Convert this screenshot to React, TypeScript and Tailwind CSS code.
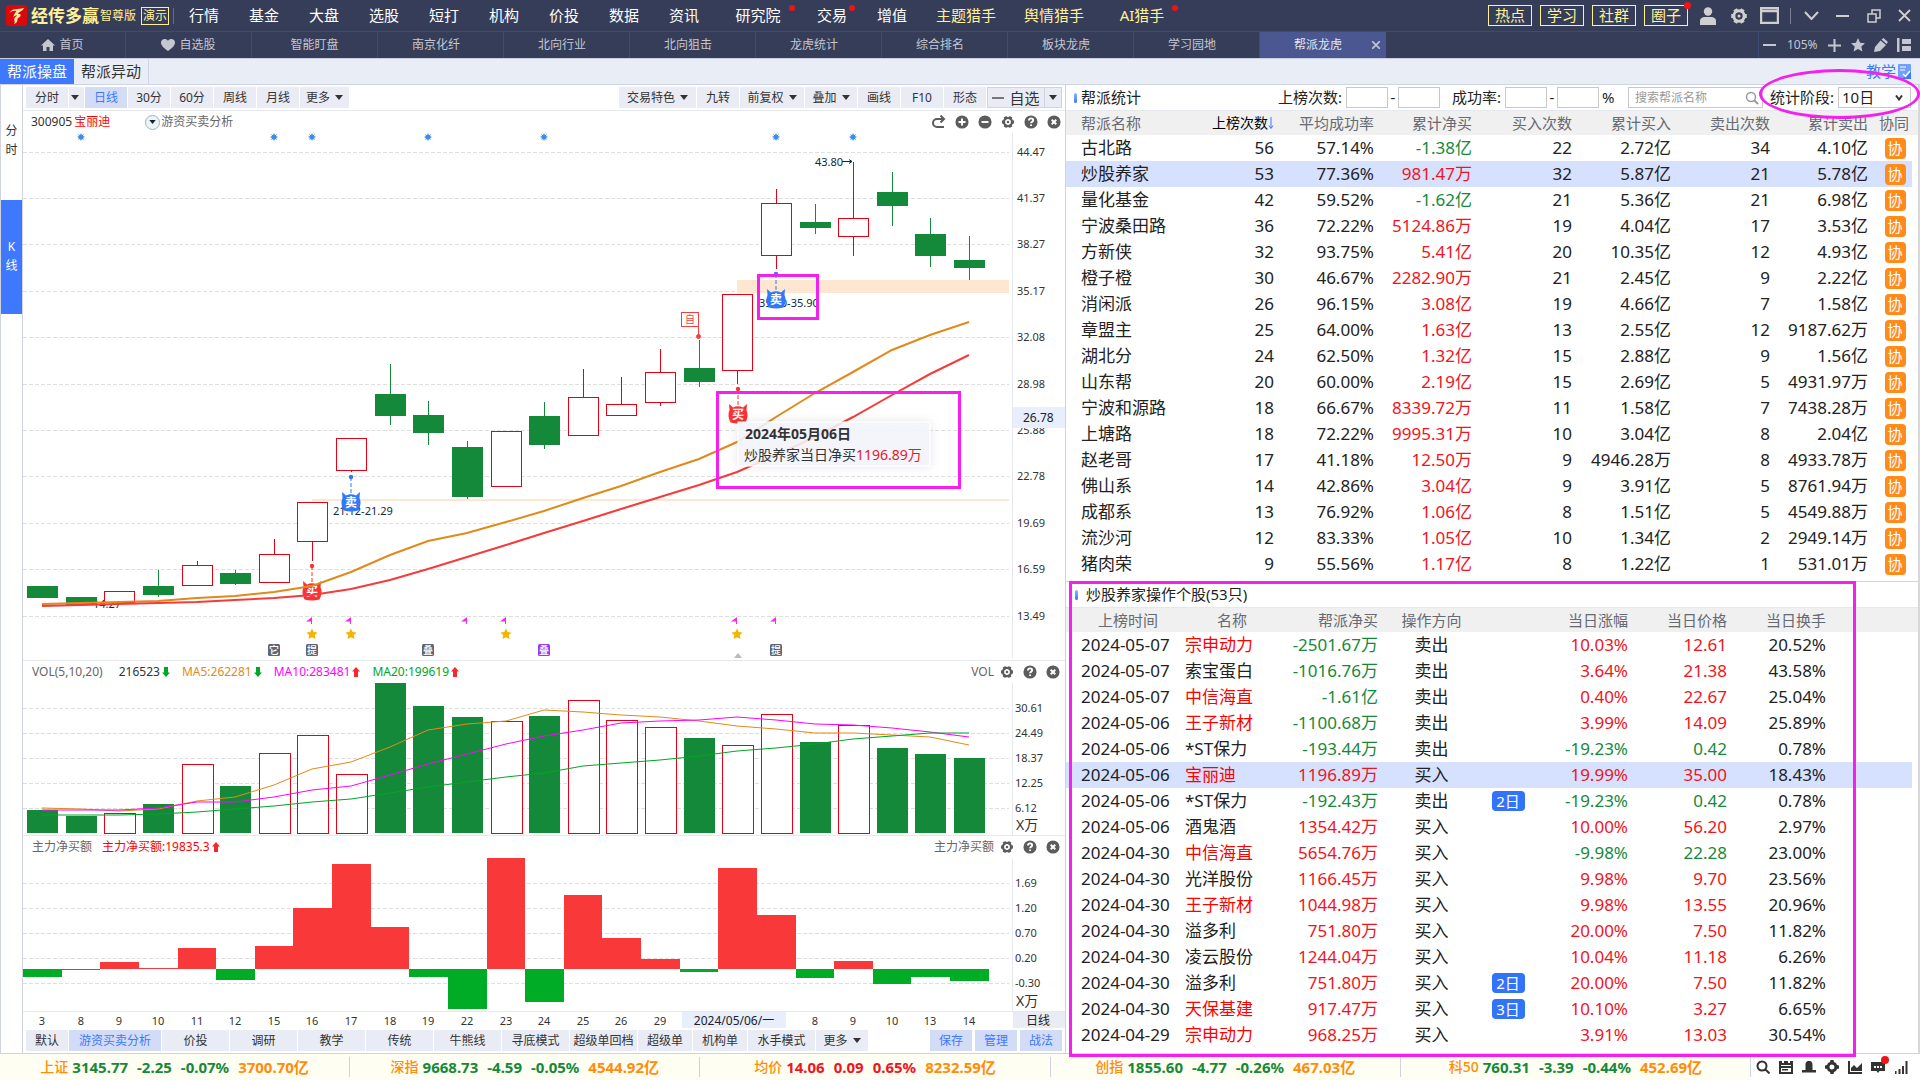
import React from "react";

const UP = "text-[#f0141e]";
const DOWN = "text-[#15893a]";
const RED = "#e60012";
const GREEN = "#15893a";

const STEP = 38.63;
const cx = (i: number) => Math.round(42 + i * STEP);
const line = (ys: number[]) => ys.map((y, i) => `${cx(i)},${y}`).join(" ");

/* ---------- data ---------- */

// [rising, body top, body bottom, wick top, wick bottom]
const candles: [number, number, number, number, number][] = [
  [0, 586, 598, 586, 598],
  [0, 597, 605, 597, 605],
  [1, 591, 603, 591, 603],
  [0, 586, 595, 570, 597],
  [1, 565, 586, 561, 586],
  [0, 573, 584, 570, 585],
  [1, 554, 583, 539, 583],
  [1, 502, 542, 502, 561],
  [1, 438, 471, 438, 472],
  [0, 394, 416, 364, 425],
  [0, 415, 433, 401, 445],
  [0, 447, 497, 441, 499],
  [1, 431, 487, 431, 487],
  [0, 416, 445, 402, 449],
  [1, 397, 436, 369, 436],
  [1, 404, 416, 377, 416],
  [1, 372, 403, 349, 406],
  [0, 368, 382, 340, 387],
  [1, 294, 371, 294, 384],
  [1, 203, 256, 189, 269],
  [0, 222, 228, 204, 234],
  [1, 218, 237, 162, 256],
  [0, 192, 206, 172, 226],
  [0, 234, 256, 218, 267],
  [0, 260, 268, 236, 280],
];
const volumeTops = [
  810, 816, 813, 804, 764, 786, 753, 735, 774, 683, 706, 717, 721, 716, 700, 720, 727, 738, 745, 714, 742, 725, 748,
  754, 758,
];
const flow = [
  977, 970, 962, 968, 948, 980, 946, 908, 864, 927, 977, 1009, 858, 1002, 895, 938, 959, 972, 868, 915, 978, 961, 984,
  977, 981,
];
const trendOrange = [
  604, 603, 602, 601, 598, 596, 592, 586, 572, 555, 541, 533, 522, 511, 498, 486, 472, 459, 442, 417, 393, 372, 350,
  335, 322,
];
const trendRed = [
  606, 605, 604, 603, 602, 600, 598, 595, 589, 580, 569, 557, 545, 533, 521, 509, 497, 485, 472, 455, 437, 417, 395,
  374, 355,
];
const ma5 = [
  808, 809, 811, 809, 801, 797, 785, 769, 762, 747, 730, 724, 721, 710, 712, 715, 717, 721, 726, 729, 733, 733, 735,
  737, 745,
];
const ma10 = [
  810, 810, 810, 808, 802, 802, 797, 790, 786, 775, 764, 754, 744, 736, 730, 723, 721, 720, 717, 720, 724, 725, 728,
  732, 737,
];
const ma20 = [
  815, 815, 815, 814, 812, 809, 806, 802, 799, 793, 787, 782, 777, 773, 766, 763, 760, 756, 751, 748, 744, 739, 736,
  733, 733,
];
const priceGrid: [string, number][] = [
  ["44.47", 152],
  ["41.37", 198],
  ["38.27", 244],
  ["35.17", 291],
  ["32.08", 337],
  ["28.98", 384],
  ["25.88", 430],
  ["22.78", 476],
  ["19.69", 523],
  ["16.59", 569],
  ["13.49", 616],
];
const volGrid: [string, number][] = [
  ["30.61", 708],
  ["24.49", 733],
  ["18.37", 758],
  ["12.25", 783],
  ["6.12", 808],
];
const flowGrid: [string, number][] = [
  ["1.69", 883],
  ["1.20", 908],
  ["0.70", 933],
  ["0.20", 958],
  ["-0.30", 983],
];
const days = "3,8,9,10,11,12,15,16,17,18,19,22,23,24,25,26,29,,,,8,9,10,13,14".split(",");

const gangs: string[][] = [
  ["古北路", "56", "57.14%", "-1.38亿", "22", "2.72亿", "34", "4.10亿"],
  ["炒股养家", "53", "77.36%", "981.47万", "32", "5.87亿", "21", "5.78亿"],
  ["量化基金", "42", "59.52%", "-1.62亿", "21", "5.36亿", "21", "6.98亿"],
  ["宁波桑田路", "36", "72.22%", "5124.86万", "19", "4.04亿", "17", "3.53亿"],
  ["方新侠", "32", "93.75%", "5.41亿", "20", "10.35亿", "12", "4.93亿"],
  ["橙子橙", "30", "46.67%", "2282.90万", "21", "2.45亿", "9", "2.22亿"],
  ["消闲派", "26", "96.15%", "3.08亿", "19", "4.66亿", "7", "1.58亿"],
  ["章盟主", "25", "64.00%", "1.63亿", "13", "2.55亿", "12", "9187.62万"],
  ["湖北分", "24", "62.50%", "1.32亿", "15", "2.88亿", "9", "1.56亿"],
  ["山东帮", "20", "60.00%", "2.19亿", "15", "2.69亿", "5", "4931.97万"],
  ["宁波和源路", "18", "66.67%", "8339.72万", "11", "1.58亿", "7", "7438.28万"],
  ["上塘路", "18", "72.22%", "9995.31万", "10", "3.04亿", "8", "2.04亿"],
  ["赵老哥", "17", "41.18%", "12.50万", "9", "4946.28万", "8", "4933.78万"],
  ["佛山系", "14", "42.86%", "3.04亿", "9", "3.91亿", "5", "8761.94万"],
  ["成都系", "13", "76.92%", "1.06亿", "8", "1.51亿", "5", "4549.88万"],
  ["流沙河", "12", "83.33%", "1.05亿", "10", "1.34亿", "2", "2949.14万"],
  ["猪肉荣", "9", "55.56%", "1.17亿", "8", "1.22亿", "1", "531.01万"],
];

// [date, name, name in red, net, side, badge, change, price, turnover]
const trades: string[][] = [
  ["2024-05-07", "宗申动力", "1", "-2501.67万", "卖出", "", "10.03%", "12.61", "20.52%"],
  ["2024-05-07", "索宝蛋白", "", "-1016.76万", "卖出", "", "3.64%", "21.38", "43.58%"],
  ["2024-05-07", "中信海直", "1", "-1.61亿", "卖出", "", "0.40%", "22.67", "25.04%"],
  ["2024-05-06", "王子新材", "1", "-1100.68万", "卖出", "", "3.99%", "14.09", "25.89%"],
  ["2024-05-06", "*ST保力", "", "-193.44万", "卖出", "", "-19.23%", "0.42", "0.78%"],
  ["2024-05-06", "宝丽迪", "1", "1196.89万", "买入", "", "19.99%", "35.00", "18.43%"],
  ["2024-05-06", "*ST保力", "", "-192.43万", "卖出", "2日", "-19.23%", "0.42", "0.78%"],
  ["2024-05-06", "酒鬼酒", "", "1354.42万", "买入", "", "10.00%", "56.20", "2.97%"],
  ["2024-04-30", "中信海直", "1", "5654.76万", "买入", "", "-9.98%", "22.28", "23.00%"],
  ["2024-04-30", "光洋股份", "", "1166.45万", "买入", "", "9.98%", "9.70", "23.56%"],
  ["2024-04-30", "王子新材", "1", "1044.98万", "买入", "", "9.98%", "13.55", "20.96%"],
  ["2024-04-30", "溢多利", "", "751.80万", "买入", "", "20.00%", "7.50", "11.82%"],
  ["2024-04-30", "凌云股份", "", "1244.04万", "买入", "", "10.04%", "11.18", "6.26%"],
  ["2024-04-30", "溢多利", "", "751.80万", "买入", "2日", "20.00%", "7.50", "11.82%"],
  ["2024-04-30", "天保基建", "1", "917.47万", "买入", "3日", "10.10%", "3.27", "6.65%"],
  ["2024-04-29", "宗申动力", "1", "968.25万", "买入", "", "3.91%", "13.03", "30.54%"],
];

const indices: string[][] = [
  ["上证", "3145.77", "-2.25", "-0.07%", "3700.70亿"],
  ["深指", "9668.73", "-4.59", "-0.05%", "4544.92亿"],
  ["均价", "14.06", "0.09", "0.65%", "8232.59亿"],
  ["创指", "1855.60", "-4.77", "-0.26%", "467.03亿"],
  ["科50", "760.31", "-3.39", "-0.44%", "452.69亿"],
];

const sign = (v: string) => (v.startsWith("-") ? DOWN : UP);

/* ---------- icons ---------- */

const Gear = ({ className = "" }: { className?: string }) => (
  <svg viewBox="0 0 16 16" className={className} fill="none" stroke="currentColor">
    <circle cx="8" cy="8" r="4.6" strokeWidth="2.6" />
    {[0, 60, 120, 180, 240, 300].map((a) => (
      <path key={a} d="M13.2 6.2v3.6" strokeWidth="3.4" transform={`rotate(${a} 8 8)`} />
    ))}
    <circle cx="8" cy="8" r="1.4" fill="currentColor" stroke="none" />
  </svg>
);
const Disc = ({ d }: { d: string }) => (
  <svg viewBox="0 0 16 16" className="size-[14px]">
    <circle cx="8" cy="8" r="7.5" fill="#5c5c5c" />
    <path d={d} fill="none" stroke="#fff" strokeWidth="2.2" />
  </svg>
);
const D_PLUS = "M8 4v8M4 8h8";
const D_MINUS = "M4 8h8";
const D_HELP = "M5.6 6.2c0-3.2 4.9-3 4.9-.2 0 1.6-2.4 1.7-2.4 3.4M8.1 10.8v1.8";
const D_CLOSE = "M5.4 5.4l5.2 5.2M10.6 5.4l-5.2 5.2";
const Caret = () => (
  <svg viewBox="0 0 8 5" className="h-[5px] w-2">
    <path d="M0 0h8L4 5z" fill="#333" />
  </svg>
);
const Arrow = ({ up }: { up?: boolean }) => (
  <svg viewBox="0 0 8 10" className="ml-[2px] h-[10px] w-2">
    <path
      d="M4 0l4 4.5H6V10H2V4.5H0z"
      fill={up ? "#f5282d" : "#00a625"}
      transform={up ? undefined : "rotate(180 4 5)"}
    />
  </svg>
);
const IconBtn = ({ label, children, className = "" }: { label: string; children: React.ReactNode; className?: string }) => (
  <button aria-label={label} className={`flex items-center justify-center ${className}`}>
    {children}
  </button>
);
const Dot = ({ className }: { className: string }) => (
  <span className={`absolute rounded-full bg-[#f01414] ${className}`} />
);

/* ---------- top bars ---------- */

const menu: [string, string, number][] = [
  ["行情", "w-[60px]", 0],
  ["基金", "w-[60px]", 0],
  ["大盘", "w-[60px]", 0],
  ["选股", "w-[60px]", 0],
  ["短打", "w-[60px]", 0],
  ["机构", "w-[60px]", 0],
  ["价投", "w-[60px]", 0],
  ["数据", "w-[60px]", 0],
  ["资讯", "w-[60px]", 0],
  ["研究院", "w-[88px]", 2],
  ["交易", "w-[60px]", 1],
  ["增值", "w-[60px]", 0],
  ["主题猎手", "w-[88px] text-[#fff19a]", 0],
  ["舆情猎手", "w-[88px] text-[#fff19a]", 0],
  ["AI猎手", "w-[88px] text-[#fff19a]", 2],
];

function TitleBar() {
  return (
    <header className="flex h-8 items-center border-b border-[#3e4a78] bg-[#363d59] text-[15px] text-white">
      <svg viewBox="0 0 21 21" className="ml-[6px] size-[21px]">
        <rect width="21" height="21" rx="3" fill="#d8080d" />
        <path
          d="M3.500 8C6 3 12 4.500 18 3c-1.500 3.500-4.500 3-6.500 6 2.500-.5 3.500.5 3 2-.5 1.300-2.500 1.500-3 3-.5 1.700.5 3.500-3.500 5 2-2.500-1-4 1-6.500 1-1.200 2-1.500 2-2.200-1.500 0-3 1-3.500 2.200C7 10.500 9 8 10.500 6 8 5.500 5.500 6 3.500 8z"
          fill="#ffe9a0"
        />
      </svg>
      <span className="ml-1 text-[17px] font-bold text-[#fff19a]">经传多赢</span>
      <span className="ml-px text-xs text-[#fff19a]">智尊版</span>
      <span className="ml-[5px] border border-[#fff19a] px-px text-xs leading-4 text-[#fff19a]">演示</span>
      <span className="ml-1 h-4 w-px bg-[#666c84]" />
      <nav className="flex">
        {menu.map(([t, c, dot]) => (
          <button key={t} className={`relative h-6 ${c}`}>
            <span className="relative">
              {t}
              {dot === 1 && <Dot className="-right-2 top-0 size-[6px]" />}
              {dot === 2 && <Dot className="-right-[14px] top-0 size-[6px]" />}
            </span>
          </button>
        ))}
      </nav>
      <div className="ml-auto flex items-center text-[#cfcfcf]">
        <div className="flex gap-2">
          {["热点", "学习", "社群", "圈子"].map((t) => (
            <button key={t} className="relative w-11 border border-[#fff19a] leading-[19px] text-[#fff19a]">
              {t}
              {t === "圈子" && <Dot className="-right-1 -top-1 size-[7px]" />}
            </button>
          ))}
        </div>
        <IconBtn label="用户" className="ml-3 w-4">
          <svg viewBox="0 0 16 18" className="h-[18px] w-4" fill="currentColor">
            <circle cx="8" cy="4.5" r="4.2" />
            <path d="M0 18v-4c0-3 3-4 4.500-4h7c1.500 0 4.500 1 4.500 4v4z" />
          </svg>
        </IconBtn>
        <IconBtn label="设置" className="ml-[14px]">
          <Gear className="size-[18px]" />
        </IconBtn>
        <IconBtn label="窗口" className="ml-3">
          <svg viewBox="0 0 19 17" className="h-[17px] w-[19px]">
            <path d="M1 1h17v15H1zM1 4h17" fill="none" stroke="currentColor" strokeWidth="2.5" />
          </svg>
        </IconBtn>
        <span className="ml-[11px] h-4 w-px bg-[#7b8095]" />
        <IconBtn label="展开" className="ml-[13px]">
          <svg viewBox="0 0 15 9" className="h-[9px] w-[15px]">
            <path d="M1 1l6.500 7L14 1" fill="none" stroke="currentColor" strokeWidth="2" />
          </svg>
        </IconBtn>
        <IconBtn label="最小化" className="ml-[17px]">
          <span className="h-[2px] w-[13px] bg-current" />
        </IconBtn>
        <IconBtn label="还原" className="ml-[18px]">
          <svg viewBox="0 0 14 14" className="size-[14px]" fill="none" stroke="currentColor" strokeWidth="1.5">
            <path d="M1 5h8v8H1zM5 5V1h8v8H9" />
          </svg>
        </IconBtn>
        <IconBtn label="关闭" className="ml-[17px] mr-[9px]">
          <svg viewBox="0 0 13 13" className="size-[13px]">
            <path d="M1 1l11 11M12 1L1 12" stroke="currentColor" strokeWidth="1.8" />
          </svg>
        </IconBtn>
      </div>
    </header>
  );
}

const pages = ["首页", "自选股", "智能盯盘", "南京化纤", "北向行业", "北向狙击", "龙虎统计", "综合排名", "板块龙虎", "学习园地"];

function PageTabs() {
  return (
    <nav className="flex h-[27px] border-b border-[#c9cfe0] bg-[#363d59] text-xs text-[#c4c7d0]">
      {pages.map((t, i) => (
        <button
          key={t}
          className={`flex w-[126px] items-center justify-center gap-1 border-r border-[#3f4b79] ${i > 2 ? "pr-[9px]" : ""}`}
        >
          {t === "首页" && (
            <svg viewBox="0 0 14 12" className="h-3 w-[14px]" fill="currentColor">
              <path d="M7 0l7 6.500h-2V12H8.500V8h-3v4H2V6.500H0z" />
            </svg>
          )}
          {t === "自选股" && (
            <svg viewBox="0 0 14 12" className="h-3 w-[14px]" fill="currentColor">
              <path d="M7 12C2 8.500 0 6 0 3.500 0 0 5-1.500 7 2c2-3.500 7-2 7 1.500C14 6 12 8.500 7 12z" />
            </svg>
          )}
          {t}
        </button>
      ))}
      <div className="relative flex w-[126px] bg-[#4a5790] text-[#e4e6ee]">
        <button className="flex-1 pr-[10px]">帮派龙虎</button>
        <button aria-label="关闭标签" className="absolute inset-y-0 right-[6px]">
          <svg viewBox="0 0 8 8" className="size-2">
            <path d="M0 0l8 8M8 0L0 8" stroke="#c4c7d0" strokeWidth="1.6" />
          </svg>
        </button>
      </div>
      <div className="ml-auto flex items-center border-l border-[#3f4b79] pl-1 pr-[9px]">
        <IconBtn label="缩小">
          <span className="h-[2px] w-[13px] bg-current" />
        </IconBtn>
        <span className="ml-[11px] w-8">105%</span>
        <IconBtn label="放大" className="ml-[9px]">
          <svg viewBox="0 0 13 13" className="size-[13px]">
            <path d="M6.500 0v13M0 6.500h13" stroke="currentColor" strokeWidth="2" />
          </svg>
        </IconBtn>
        <IconBtn label="收藏" className="ml-[10px]">
          <svg viewBox="0 0 14 14" className="size-[14px]" fill="currentColor">
            <path d="M7 0l2.100 4.700 4.900.5-3.700 3.400 1.100 5L7 11l-4.400 2.600 1.100-5L0 5.200l4.900-.5z" />
          </svg>
        </IconBtn>
        <IconBtn label="编辑" className="ml-[9px]">
          <svg viewBox="0 0 14 14" className="size-[14px]" fill="currentColor">
            <path d="M0 14l1-5 5.500-6.500L12 7l-6 6zM7.500 1.500L9.500 0 14 4l-1.500 2z" />
          </svg>
        </IconBtn>
        <IconBtn label="布局" className="ml-[9px]">
          <svg viewBox="0 0 14 14" className="size-[14px]" fill="currentColor">
            <path d="M0 0h2.500v14H0zM5 1h9v5H5zM5 8h9v5H5z" />
          </svg>
        </IconBtn>
      </div>
    </nav>
  );
}

function SubTabs() {
  return (
    <nav className="flex h-[26px] border-b border-[#d0d5e6] bg-[#e9edf5] text-[15px] text-[#333]">
      <button className="w-[74px] bg-[#3d78ff] text-white">帮派操盘</button>
      <button className="w-[75px] border-r border-[#cfd5e6]">帮派异动</button>
      <a href="#teach" className="ml-auto flex items-center gap-[2px] pr-[9px] text-[#3d78ff]">
        教学
        <svg viewBox="0 0 13 15" className="h-[15px] w-[13px]">
          <rect width="13" height="15" rx="1" fill="#6fa0ff" />
          <path d="M13 7v8H4z" fill="#3d78ff" />
          <path d="M2 3h6M2 6h5" stroke="#fff" />
          <path d="M5 10l2.500 2.500L12 7" fill="none" stroke="#fff" strokeWidth="1.5" />
        </svg>
      </a>
    </nav>
  );
}

/* ---------- chart column ---------- */

const toolBtn = "flex h-[21px] items-center justify-center gap-[5px] whitespace-nowrap bg-[#e9ecf5]";

function ChartToolbar() {
  return (
    <div className="flex h-[26px] items-center border-b border-[#e6e8f0] px-[3px] text-xs text-[#333]">
      <div className="flex gap-px">
        <button className={`${toolBtn} w-[42px]`}>分时</button>
        <button aria-label="分时选项" className={`${toolBtn} w-[15px] pr-1`}>
          <Caret />
        </button>
        <button className="h-[21px] w-[42px] bg-[#d3dcf6] text-[#3d78ff]">日线</button>
        {["30分", "60分", "周线", "月线"].map((t) => (
          <button key={t} className={`${toolBtn} w-[42px]`}>
            {t}
          </button>
        ))}
        <button className={`${toolBtn} w-[49px]`}>
          更多
          <Caret />
        </button>
      </div>
      <div className="ml-auto flex gap-px">
        <button className={`${toolBtn} w-[77px]`}>
          交易特色
          <Caret />
        </button>
        <button className={`${toolBtn} w-[42px]`}>九转</button>
        <button className={`${toolBtn} w-[64px]`}>
          前复权
          <Caret />
        </button>
        <button className={`${toolBtn} w-[52px]`}>
          叠加
          <Caret />
        </button>
        {["画线", "F10", "形态"].map((t) => (
          <button key={t} className={`${toolBtn} w-[42px]`}>
            {t}
          </button>
        ))}
        <div className="flex">
          <button className={`${toolBtn} w-[58px] border border-[#cdd3e8] text-[15px]`}>
            <span className="h-[2px] w-3 bg-[#777]" />
            自选
          </button>
          <button aria-label="自选选项" className={`${toolBtn} w-[17px] border border-l-0 border-[#cdd3e8]`}>
            <Caret />
          </button>
        </div>
      </div>
    </div>
  );
}

const Grid = ({ rows, labelX }: { rows: [string, number][]; labelX: number }) => (
  <>
    {rows.map(([t, y]) => (
      <g key={t}>
        <path d={`M23 ${y + 0.5}H1009`} stroke="#dedede" strokeDasharray="4 2" />
        <text x={labelX} y={y + 4} fontSize="11" fill="#333">
          {t}
        </text>
      </g>
    ))}
  </>
);

const Devil = ({ x, y, buy }: { x: number; y: number; buy?: boolean }) => {
  const c = buy ? "#fa3232" : "#3278fa";
  return (
    <g transform={`translate(${x} ${y})`}>
      <path d="M0 -25v16" stroke={c} strokeDasharray="4 2" />
      <circle cy="-25" r="2.2" fill={c} />
      <path d="M-9 -10l4 3.500Q0 -9 5 -6.500L9 -10l-.5 6Q11 2 7.500 8.500Q0 10.500 -7.500 8.500Q-11 2 -8.500 -4z" fill={c} />
      <text y="5" fontSize="12" fontWeight="bold" fill="#fff" textAnchor="middle">
        {buy ? "买" : "卖"}
      </text>
    </g>
  );
};

const star = "M0 -5.500l1.700 3.600 3.800.5-2.800 2.600.8 3.900L0 3.200l-3.500 1.900.8-3.900L-5.500 -1.400l3.800-.5z";
const marks: [number, string, string][] = [
  [6, "它", "#5f6673"],
  [7, "提", "#5f6673"],
  [10, "叠", "#5f6673"],
  [13, "叠", "#9a3df0"],
  [19, "提", "#5f6673"],
];

function PriceChart() {
  return (
    <svg viewBox="23 133 1042 527" className="block w-full" role="img" aria-label="K线图">
      <defs>
        <filter id="tipShadow" x="-20%" y="-60%" width="140%" height="220%">
          <feDropShadow dx="0" dy="0" stdDeviation="5" floodColor="#000" floodOpacity="0.12" />
        </filter>
      </defs>
      <Grid rows={priceGrid} labelX={1017} />
      <path d="M1012.500 133V658" stroke="#e6e8f0" />
      <rect x="737" y="280" width="272" height="13" fill="#ffe6d0" />
      <path d="M312 500H1009" stroke="#ffe6d0" strokeWidth="2" />
      {[1, 6, 7, 10, 13, 19, 21].map((i) => (
        <g key={i} transform={`translate(${cx(i)} 137)`}>
          <circle r="2.6" fill="#3c8cf0" />
          <path d="M0 -3.500v7M-3.500 0h7M-2.500 -2.500l5 5M2.500 -2.500l-5 5" stroke="#3c8cf0" />
        </g>
      ))}
      <g fontSize="11" fill="#0d2b3e">
        <text x="815" y="166">43.80</text>
        <path d="M842 161.500h10M849 159.500l3 2-3 2" stroke="#0d2b3e" fill="none" />
        <text x="333" y="515">21.12-21.29</text>
        <text x="759" y="307">35.00-35.90</text>
        <text x="93" y="608">14.27</text>
      </g>
      {candles.map(([up, t, b, wt, wb], i) =>
        up ? (
          <g key={i} stroke={RED} fill="none">
            <path d={`M${cx(i) + 0.5} ${wt}V${t}M${cx(i) + 0.5} ${b}V${wb}`} />
            <rect x={cx(i) - 14.5} y={t + 0.5} width="30" height={b - t - 1} fill="#fff" />
          </g>
        ) : (
          <g key={i} fill={GREEN}>
            <rect x={cx(i)} y={wt} width="1" height={wb - wt} />
            <rect x={cx(i) - 15} y={t} width="31" height={b - t} />
          </g>
        ),
      )}
      <Devil x={312} y={591} buy />
      <polyline points={line(trendOrange)} fill="none" stroke="#e08a1a" strokeWidth="2" />
      <polyline points={line(trendRed)} fill="none" stroke="#f53b3b" strokeWidth="2" />
      <Devil x={351} y={502} />
      <Devil x={776} y={299} />
      <Devil x={738} y={414} buy />
      <g stroke="#fa3c3c">
        <rect x="681.5" y="312.5" width="17" height="14" fill="#fff" />
        <path d="M698.500 327v10" />
        <circle cx="698.5" cy="336.5" r="2" fill="#fa3c3c" />
      </g>
      <text x="690" y="323" fontSize="10" fill="#fa3c3c" textAnchor="middle">
        自
      </text>
      {[7, 8, 11, 12, 18, 19].map((i) => (
        <path key={i} d={`M${cx(i)} 617v7h-1v-2.500h-5z`} fill="#f528f0" />
      ))}
      {[7, 8, 12, 18].map((i) => (
        <path key={i} d={star} transform={`translate(${cx(i)} 634)`} fill="#f5b400" />
      ))}
      {marks.map(([i, t, c]) => (
        <g key={i}>
          <rect x={cx(i) - 6} y="644" width="12" height="12" rx="1.5" fill={c} />
          <text x={cx(i)} y="654" fontSize="10" fontWeight="500" fill="#fff" textAnchor="middle">
            {t}
          </text>
        </g>
      ))}
      <path d="M738 653l4 5h-8z" fill="#bbb" />
      <rect x="1013" y="407" width="52" height="21" fill="#e8eefc" />
      <text x="1023" y="422" fontSize="12" fill="#222">
        26.78
      </text>
      <rect x="738" y="422" width="192" height="44" fill="#f3f5fb" fillOpacity="0.88" stroke="#fff" filter="url(#tipShadow)" />
      <g fontSize="14" fill="#333">
        <text x="745" y="439" fontWeight="bold">
          2024年05月06日
        </text>
        <text x="744" y="460">
          炒股养家当日净买
          <tspan fill="#f0141e">1196.89万</tspan>
        </text>
      </g>
      <g fill="none" stroke="#f51ff0" strokeWidth="3">
        <rect x="758.5" y="275.5" width="59" height="43" />
        <rect x="717.5" y="392.5" width="242" height="95" />
      </g>
    </svg>
  );
}

function VolumeChart() {
  return (
    <svg viewBox="23 683 1042 152" className="block w-full" role="img" aria-label="成交量">
      <Grid rows={volGrid} labelX={1015} />
      <path d="M1012.500 683V835" stroke="#e6e8f0" />
      {volumeTops.map((t, i) =>
        candles[i][0] ? (
          <rect key={i} x={cx(i) - 14.5} y={t + 0.5} width="31" height={833 - t} fill="#fff" stroke={RED} />
        ) : (
          <rect key={i} x={cx(i) - 15} y={t} width="31" height={833 - t} fill={GREEN} />
        ),
      )}
      <g fill="none">
        <polyline points={line(ma5)} stroke="#e08a1a" />
        <polyline points={line(ma10)} stroke="#ff00ff" />
        <polyline points={line(ma20)} stroke="#00a625" />
      </g>
      <text x="1016" y="830" fontSize="14" fill="#333">
        X万
      </text>
    </svg>
  );
}

function FlowChart() {
  return (
    <svg viewBox="23 858 1042 153" className="block w-full" role="img" aria-label="主力净买额">
      <Grid rows={flowGrid} labelX={1015} />
      <path d="M1012.500 858V1011" stroke="#e6e8f0" />
      {flow.map((y, i) => {
        const x0 = Math.round(23 + i * STEP);
        const x1 = Math.round(23 + (i + 1) * STEP);
        return (
          <rect
            key={i}
            x={x0}
            y={Math.min(y, 969)}
            width={x1 - x0}
            height={Math.abs(y - 969)}
            fill={y < 969 ? "#f93939" : "#00ab25"}
          />
        );
      })}
      <text x="1016" y="1006" fontSize="14" fill="#333">
        X万
      </text>
    </svg>
  );
}

function DateAxis() {
  return (
    <svg viewBox="23 1012 1042 16" className="block w-full" role="img" aria-label="日期">
      <rect x="682" y="1012" width="104" height="16" fill="#e8eefc" />
      <rect x="1013" y="1012" width="52" height="16" fill="#e9ecf5" />
      <g fontSize="11" fill="#333" textAnchor="middle">
        {days.map((d, i) => (
          <text key={i} x={cx(i)} y="1025">
            {d}
          </text>
        ))}
      </g>
      <g fontSize="12" fill="#222" textAnchor="middle">
        <text x="734" y="1025">2024/05/06/一</text>
        <text x="1038" y="1025">日线</text>
      </g>
    </svg>
  );
}

const PanelIcons = ({ label }: { label: string }) => (
  <div className="ml-auto flex items-center pr-[5px] text-[#666]">
    {label}
    <IconBtn label="设置" className="ml-[6px] text-[#5c5c5c]">
      <Gear className="size-[14px]" />
    </IconBtn>
    <IconBtn label="帮助" className="ml-[9px]">
      <Disc d={D_HELP} />
    </IconBtn>
    <IconBtn label="关闭" className="ml-[9px]">
      <Disc d={D_CLOSE} />
    </IconBtn>
  </div>
);

const templates: [string, string][] = [
  ["价投", "w-[67px]"],
  ["调研", "w-[67px]"],
  ["教学", "w-[67px]"],
  ["传统", "w-[67px]"],
  ["牛熊线", "w-[67px]"],
  ["寻底模式", "w-[67px]"],
  ["超级单回档", "w-[67px]"],
  ["超级单", "w-[54px]"],
  ["机构单", "w-[54px]"],
  ["水手模式", "w-[67px]"],
];

function ChartColumn() {
  return (
    <section className="flex min-w-0 border-r border-[#cfd3e6]">
      <div className="flex w-[23px] shrink-0 flex-col border-l border-r border-[#cfd3e0] text-xs text-[#333]">
        <button className="flex h-[115px] flex-col items-center pt-9 leading-[19px]">
          <span>分</span>
          <span>时</span>
        </button>
        <button className="flex h-[114px] flex-col items-center justify-center bg-[#3d78ff] pb-[3px] leading-[19px] text-white">
          <span>K</span>
          <span>线</span>
        </button>
      </div>
      <div className="flex min-w-0 flex-1 flex-col text-xs">
        <ChartToolbar />
        <div className="flex h-[22px] items-center pl-2 text-[#333]">
          300905<span className="ml-[2px] text-[#ff0000]">宝丽迪</span>
          <button className="ml-[35px] flex items-center gap-px text-[#666]">
            <span className="flex size-[15px] items-center justify-center rounded-full border border-[#9db4c4] bg-[#edf4f8]">
              <svg viewBox="0 0 8 5" className="h-1 w-[7px]">
                <path d="M0 0h8L4 5z" fill="#123" />
              </svg>
            </span>
            游资买卖分析
          </button>
          <div className="ml-auto flex gap-[9px] pr-1">
            <IconBtn label="刷新">
              <svg viewBox="0 0 14 14" className="size-[14px]" fill="none" stroke="#5c5c5c" strokeWidth="2">
                <path d="M11 4H5a3.500 3.500 0 0 0 0 8h7M8.500 .5L12 4l-3.500 3.500" />
              </svg>
            </IconBtn>
            <IconBtn label="放大">
              <Disc d={D_PLUS} />
            </IconBtn>
            <IconBtn label="缩小">
              <Disc d={D_MINUS} />
            </IconBtn>
            <IconBtn label="设置" className="text-[#5c5c5c]">
              <Gear className="size-[14px]" />
            </IconBtn>
            <IconBtn label="帮助">
              <Disc d={D_HELP} />
            </IconBtn>
            <IconBtn label="关闭">
              <Disc d={D_CLOSE} />
            </IconBtn>
          </div>
        </div>
        <PriceChart />
        <div className="flex h-[23px] items-center border-t border-[#e6e8f0] pl-[9px]">
          <span className="text-[#666]">VOL(5,10,20)</span>
          <span className="ml-4 flex items-center text-[#333]">
            216523
            <Arrow />
          </span>
          <span className="ml-3 flex items-center text-[#e08a1a]">
            MA5:262281
            <Arrow />
          </span>
          <span className="ml-3 flex items-center text-[#ff00ff]">
            MA10:283481
            <Arrow up />
          </span>
          <span className="ml-3 flex items-center text-[#00a625]">
            MA20:199619
            <Arrow up />
          </span>
          <PanelIcons label="VOL" />
        </div>
        <VolumeChart />
        <div className="flex h-[23px] items-center border-t border-[#e6e8f0] pl-[9px]">
          <span className="text-[#666]">主力净买额</span>
          <span className="ml-[10px] flex items-center text-[#ff0000]">
            主力净买额:19835.3
            <Arrow up />
          </span>
          <PanelIcons label="主力净买额" />
        </div>
        <FlowChart />
        <div className="border-t border-[#e6e8f0]">
          <DateAxis />
        </div>
        <div className="flex h-[25px] items-center pl-[3px] pr-[3px] text-[#333]">
          <div className="flex gap-px">
            <button className={`${toolBtn} w-[42px]`}>默认</button>
            <button className="h-[21px] w-[92px] bg-[#d3dcf6] text-[#3d78ff]">游资买卖分析</button>
            {templates.map(([t, w]) => (
              <button key={t} className={`${toolBtn} ${w}`}>
                {t}
              </button>
            ))}
            <button className={`${toolBtn} w-[52px]`}>
              更多
              <Caret />
            </button>
          </div>
          <div className="ml-auto flex gap-[3px]">
            {["保存", "管理", "战法"].map((t) => (
              <button key={t} className="h-[21px] w-[42px] bg-[#d3dcf6] text-[#3d78ff]">
                {t}
              </button>
            ))}
          </div>
        </div>
      </div>
    </section>
  );
}

/* ---------- statistics column ---------- */

const Mark = () => <span className="h-[10px] w-[3px] rounded-sm bg-gradient-to-b from-[#8fb4ff] to-[#3d78ff]" />;
const Field = ({ label }: { label: string }) => (
  <input aria-label={label} className="h-[21px] w-[42px] border border-[#c8c8c8] px-1 text-xs outline-none" />
);
const gangHeads = ["平均成功率", "累计净买", "买入次数", "累计买入", "卖出次数", "累计卖出"];
const gangCols = [110, 98, 100, 98, 100, 99, 99, 98, 44];
const tradeCols = [117, 96, 99, 107, 46, 97, 99, 99, 86];

function GangStats() {
  return (
    <section>
      <div className="relative flex h-[26px] items-center border-b border-[#e6e8f0] pl-2 pr-[7px] text-[15px] text-[#222]">
        <Mark />
        <h2 className="ml-[4px]">帮派统计</h2>
        <div className="ml-auto flex items-center">
          <span className="mr-1">上榜次数:</span>
          <Field label="上榜次数下限" />
          <span className="w-[10px] text-center">-</span>
          <Field label="上榜次数上限" />
          <span className="ml-3 mr-1">成功率:</span>
          <Field label="成功率下限" />
          <span className="w-[10px] text-center">-</span>
          <Field label="成功率上限" />
          <span className="ml-[3px] w-[13px]">%</span>
          <label className="ml-[13px] flex h-[21px] w-[135px] items-center border border-[#c8c8c8] pl-[6px] pr-[3px]">
            <input
              aria-label="搜索帮派名称"
              placeholder="搜索帮派名称"
              className="min-w-0 flex-1 text-xs outline-none placeholder:text-[#999]"
            />
            <svg viewBox="0 0 14 14" className="size-[14px]" fill="none" stroke="#999" strokeWidth="1.5">
              <circle cx="6" cy="6" r="4.5" />
              <path d="M9.500 9.500L13 13" strokeWidth="2" />
            </svg>
          </label>
          <label htmlFor="stage" className="ml-[7px] mr-[4px]">
            统计阶段:
          </label>
          <span className="relative flex">
            <select
              id="stage"
              className="h-[21px] w-[73px] appearance-none border border-[#c8c8c8] bg-white pl-[3px] text-[15px] leading-[19px]"
            >
              <option>10日</option>
            </select>
            <svg viewBox="0 0 8 6" className="pointer-events-none absolute right-[8px] top-2 h-[6px] w-2">
              <path d="M1 .5l3 4 3-4" fill="none" stroke="#333" strokeWidth="2" />
            </svg>
          </span>
        </div>
        <div className="pointer-events-none absolute -right-[2px] -top-4 z-10 h-[50px] w-[161px] rounded-[50%] border-[3px] border-[#f51ff0]" />
      </div>
      <div className="bg-[linear-gradient(to_bottom,#f0f0f0_24px,transparent_24px)] pr-[6px]">
        <table className="w-full table-fixed border-collapse text-right text-[17px] text-[#222]">
          <colgroup>
            {gangCols.map((w, i) => (
              <col key={i} style={{ width: w }} />
            ))}
          </colgroup>
          <thead>
            <tr className="h-6 text-[15px] text-[#666a72]">
              <th className="p-0 pl-[15px] text-left font-normal">帮派名称</th>
              <th className="p-0 text-sm font-normal text-black">
                <span className="flex items-center justify-end whitespace-nowrap">
                  上榜次数
                  <svg viewBox="0 0 6 14" className="h-[14px] w-[6px]" fill="none" stroke="#3d78ff">
                    <path d="M3 1v11M1 9.500l2 3 2-3" />
                  </svg>
                </span>
              </th>
              {gangHeads.map((h) => (
                <th key={h} className="p-0 font-normal">
                  {h}
                </th>
              ))}
              <th className="p-0 pl-2 text-center font-normal">协同</th>
            </tr>
          </thead>
          <tbody>
            {gangs.map((r, k) => (
              <tr key={r[0]} className={`h-[26px] leading-[26px] ${k === 1 ? "bg-[#d6e0ff]" : ""}`}>
                <td className="p-0 pl-[15px] text-left">{r[0]}</td>
                {r.slice(1).map((v, i) => (
                  <td key={i} className={`whitespace-nowrap p-0 ${i === 2 ? sign(v) : ""}`}>
                    {v}
                  </td>
                ))}
                <td className="p-0 pl-[10px]">
                  <button className="mx-auto block h-[21px] w-[21px] rounded-sm bg-[#ff8c1a] text-[15px] leading-[21px] text-white">
                    协
                  </button>
                </td>
              </tr>
            ))}
          </tbody>
        </table>
      </div>
    </section>
  );
}

function GangTrades() {
  return (
    <section className="relative mt-[4px] flex-1 border-t border-[#cfd3e6]">
      <div className="flex h-[26px] items-center border-b border-[#e6e8f0] pl-[9px] text-[15px] text-[#222]">
        <Mark />
        <h2 className="ml-2">炒股养家操作个股(53只)</h2>
      </div>
      <div className="bg-[linear-gradient(to_bottom,#f0f0f0_24px,transparent_24px)] pr-[6px]">
        <table className="w-full table-fixed border-collapse text-right text-[17px] text-[#222]">
          <colgroup>
            {tradeCols.map((w, i) => (
              <col key={i} style={{ width: w }} />
            ))}
          </colgroup>
          <thead>
            <tr className="h-6 text-[15px] text-[#666a72]">
              <th className="p-0 pl-[7px] text-center font-normal">上榜时间</th>
              <th className="p-0 pl-[2px] text-center font-normal">名称</th>
              <th className="p-0 font-normal">帮派净买</th>
              <th className="p-0 text-center font-normal">操作方向</th>
              <th className="p-0" />
              <th className="p-0 font-normal">当日涨幅</th>
              <th className="p-0 font-normal">当日价格</th>
              <th className="p-0 font-normal">当日换手</th>
              <th className="p-0" />
            </tr>
          </thead>
          <tbody>
            {trades.map((r, k) => (
              <tr key={k} className={`h-[26px] whitespace-nowrap leading-[26px] ${k === 5 ? "bg-[#d6e0ff]" : ""}`}>
                <td className="p-0 pl-[15px] text-left">{r[0]}</td>
                <td className={`p-0 pl-[2px] text-left ${r[2] ? "text-[#ff0000]" : ""}`}>{r[1]}</td>
                <td className={`p-0 ${sign(r[3])}`}>{r[3]}</td>
                <td className="p-0 text-center">{r[4]}</td>
                <td className="p-0">
                  {r[5] && (
                    <span className="mx-auto block h-5 w-[33px] rounded-sm bg-[#3273fa] text-center text-[15px] leading-5 text-white">
                      {r[5]}
                    </span>
                  )}
                </td>
                <td className={`p-0 ${sign(r[6])}`}>{r[6]}</td>
                <td className={`p-0 ${sign(r[6])}`}>{r[7]}</td>
                <td className="p-0">{r[8]}</td>
                <td className="p-0" />
              </tr>
            ))}
          </tbody>
        </table>
      </div>
      <div className="pointer-events-none absolute -bottom-[4px] left-[3px] right-[62px] -top-px z-10 border-[3px] border-[#f51ff0]" />
    </section>
  );
}

/* ---------- status bar ---------- */

const statusIcons: [string, React.ReactNode][] = [
  [
    "搜索",
    <path
      key="a"
      d="M9.500 9.500L13.500 13.500M6 1.500a4.500 4.500 0 1 0 0 9 4.500 4.500 0 0 0 0-9z"
      fill="none"
      stroke="#333"
      strokeWidth="2"
    />,
  ],
  ["日历", <path key="a" d="M0 1h3v2h2V1h4v2h2V1h3v13H0zM2 5v1h10V5zM2 8v4h10V8zM3 9h6v1.500H3z" fillRule="evenodd" />],
  ["提醒", <path key="a" d="M7 1c3 0 3.500 2 3.500 4v5H14v2.500H0V10h3.500V5c0-2 .5-4 3.500-4z" />],
  [
    "设置",
    <path
      key="a"
      d="M5.500 0h3l.5 2 2 1 1 2 2 .5v3l-2 .5-1 2-2 1-.5 2h-3L5 12l-2-1-1-2-2-.5v-3L2 5l1-2 2-1zM7 4.500a2.500 2.500 0 1 0 0 5 2.500 2.500 0 0 0 0-5z"
      fillRule="evenodd"
    />,
  ],
  ["走势", <path key="a" d="M0 1h2v11h12v2H0zM3 11V8l3-3 3 3 5-5v8z" />],
  ["消息", <path key="a" d="M0 2h14v9H8.500L7 13l-1.500-2H0zM3 6v2h2V6zM6 6v2h2V6zM9 6v2h2V6z" fillRule="evenodd" />],
  ["信号", <path key="a" d="M1 11h1.500v3H1zM4.500 9h2v5h-2zM8 6h2v8H8zM11.500 1h2v13h-2z" />],
];

function StatusBar() {
  return (
    <footer className="flex h-[27px] items-center border-t border-[#cfd3e0] text-[15px]">
      <div className="flex h-full flex-1 items-center bg-[#fffef2]">
        {indices.map((r) => {
          const c = r[2].startsWith("-") ? DOWN : UP;
          return (
            <div key={r[0]} className="flex flex-1 items-center justify-center border-r border-[#cfd3e0] font-bold leading-5">
              <span className="text-sm font-medium text-[#ff8c0a]">{r[0]}</span>
              <span className={`ml-1 ${c}`}>{r[1]}</span>
              <span className={`ml-[9px] ${c}`}>{r[2]}</span>
              <span className={`ml-[9px] ${c}`}>{r[3]}</span>
              <span className="ml-[9px] text-[#ff8c0a]">{r[4]}</span>
            </div>
          );
        })}
      </div>
      <div className="flex gap-[9px] pl-[5px] pr-3">
        {statusIcons.map(([t, p]) => (
          <button key={t} aria-label={t} className="relative">
            <svg viewBox="0 0 14 14" className="size-[14px]" fill="#333">
              {p}
            </svg>
            {t === "消息" && <Dot className="-right-1 -top-1 size-2" />}
          </button>
        ))}
      </div>
    </footer>
  );
}

export default function App() {
  return (
    <div className="flex min-h-screen flex-col bg-white font-['Noto_Sans','Noto_Sans_CJK_SC',sans-serif] leading-none">
      <TitleBar />
      <PageTabs />
      <SubTabs />
      <main className="grid flex-1 grid-cols-[minmax(0,1066fr)_minmax(0,854fr)]">
        <ChartColumn />
        <div className="flex min-w-0 flex-col border-r-2 border-[#d8d8dc]">
          <GangStats />
          <GangTrades />
        </div>
      </main>
      <StatusBar />
    </div>
  );
}
